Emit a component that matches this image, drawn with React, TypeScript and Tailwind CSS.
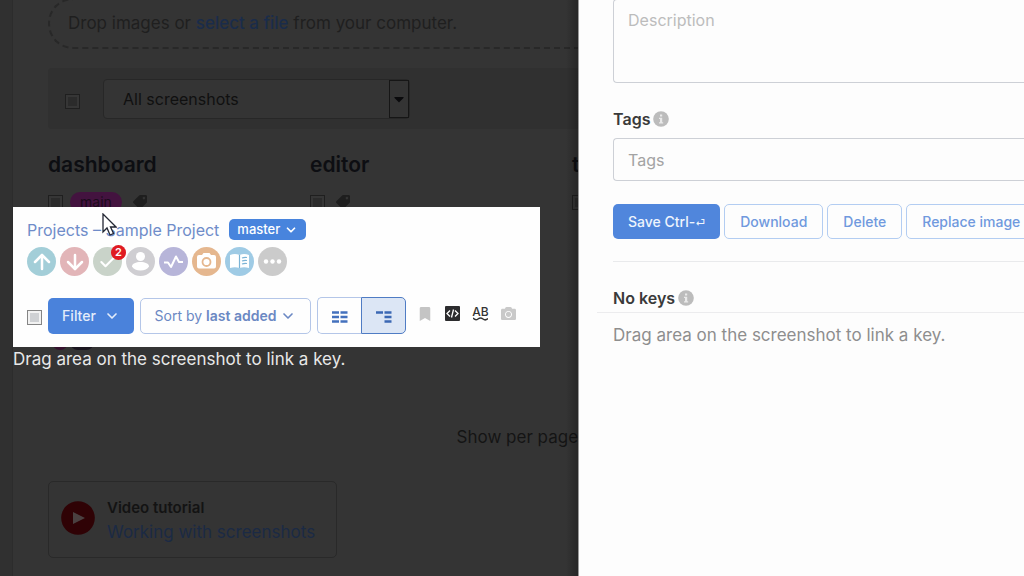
import React from "react";
import { ArrowDown, ArrowUp, Check, ChevronDown } from "lucide-react";
import { FaBookmark, FaCamera, FaCaretDown, FaTag } from "react-icons/fa";

const circles: { label: string; color: string; icon: React.ReactNode; count?: number }[] = [
  {
    label: "Upload",
    color: "bg-[#a3ced8]",
    icon: <ArrowUp className="size-6" strokeWidth={2.5} />,
  },
  {
    label: "Download",
    color: "bg-[#e2b5b8]",
    icon: <ArrowDown className="size-6" strokeWidth={2.5} />,
  },
  {
    label: "Tasks",
    color: "bg-[#c9d3c9]",
    icon: <Check className="size-5" strokeWidth={2.5} />,
    count: 2,
  },
  {
    label: "Contributors",
    color: "bg-[#cfced2]",
    icon: (
      <svg viewBox="0 0 29 29" className="size-full" fill="currentColor">
        <circle cx="14.500" cy="9.500" r="4.500" />
        <path d="M6 19.500c0-3 4-4.500 8.500-4.500s8.500 1.500 8.500 4.500c-1.500 2.500-4.500 4-8.500 4s-7-1.500-8.500-4z" />
      </svg>
    ),
  },
  {
    label: "Activity",
    color: "bg-[#b7b5d9]",
    icon: (
      <svg viewBox="0 0 29 29" className="size-full" fill="none" stroke="currentColor" strokeWidth="2">
        <path d="M5 15.500h4l3 4.500 5-10.500 3 5.500h4" strokeLinejoin="round" />
      </svg>
    ),
  },
  {
    label: "Screenshots",
    color: "bg-[#e5b78f]",
    icon: (
      <svg viewBox="0 0 29 29" className="size-full">
        <path d="M5 10q0-2 2-2h3l1.500-2h6L19 8h3q2 0 2 2v9.500q0 2-2 2H7q-2 0-2-2z" fill="currentColor" />
        <circle cx="14.500" cy="15" r="4" fill="none" stroke="#e5b78f" strokeWidth="1.800" />
      </svg>
    ),
  },
  {
    label: "Glossary",
    color: "bg-[#9fcbe5]",
    icon: (
      <svg viewBox="0 0 29 29" className="size-full">
        <path d="M5 8q5-2 9.500 0 4.500-2 9.500 0v13q-5-1.500-9.500 0-4.500-1.500-9.500 0z" fill="currentColor" />
        <path d="M14.500 8v13M17 11q2.500-1 5-.5M17 14q2.500-1 5-.5M17 17q2.500-1 5-.5" fill="none" stroke="#7bb4d6" strokeWidth="1.200" />
      </svg>
    ),
  },
  {
    label: "More",
    color: "bg-[#cbcbcb]",
    icon: (
      <svg viewBox="0 0 29 29" className="size-full" fill="currentColor">
        <circle cx="8" cy="14.500" r="2.200" />
        <circle cx="14.500" cy="14.500" r="2.200" />
        <circle cx="21" cy="14.500" r="2.200" />
      </svg>
    ),
  },
];

const groups = [
  { name: "dashboard", tag: "main" },
  { name: "editor", tag: "" },
  { name: "t", tag: "" },
];

const InfoIcon = () => (
  <svg viewBox="0 0 16 16" className="size-4">
    <circle cx="8" cy="8" r="7.800" fill="#bcbcbc" />
    <path d="M7 3.500h2.200v2H7zM6 6.800h3.200v4.400h1V12.500H6v-1.300h1V8H6z" fill="#e9e9e9" />
  </svg>
);

const DarkCheckbox: React.FC<{ label: string }> = ({ label }) => (
  <input
    type="checkbox"
    aria-label={label}
    className="size-[15px] shrink-0 appearance-none border border-[#1f1f1f] bg-[#2b2b2b] shadow-[inset_0_0_0_2px_#363636]"
  />
);

const OutlineButton: React.FC<{ children: React.ReactNode }> = ({ children }) => (
  <button className="h-[35px] shrink-0 rounded-[5px] border border-[#b3cdf2] px-[15px] text-sm font-medium whitespace-nowrap text-[#7099de]">
    {children}
  </button>
);

const Screenshots = () => (
  <main className="relative flex min-w-0 overflow-hidden bg-[#343434]">
    <div className="w-[13px] shrink-0 border-r border-[#2c2c2c] bg-[#303030]" />
    <div className="min-w-0 flex-1 pl-[35px]">
      <div className="-mt-0.5 flex h-[51px] items-center rounded-l-[25px] border-2 border-r-0 border-dashed border-[#282828] pl-[18px] text-[17px] whitespace-nowrap text-[#1f1f1f]">
        <p>
          Drop images or{" "}
          <a href="#select" className="font-medium text-[#1a2c4a]">
            select a file
          </a>{" "}
          from your computer.
        </p>
      </div>

      <div className="mt-[19px] flex h-[61px] items-center gap-[23px] rounded-l bg-[#303030] pl-[17px]">
        <span className="flex pt-1.5">
          <DarkCheckbox label="Select all" />
        </span>
        <div className="flex h-10 w-[307px] shrink-0 rounded-[4px] border border-[#272727] bg-[#343434]">
          <select
            aria-label="Filter screenshots"
            className="min-w-0 flex-1 appearance-none pl-[19px] text-base text-[#101010]"
          >
            <option>All screenshots</option>
          </select>
          <span className="flex w-5 items-center justify-center border border-[#161616]">
            <FaCaretDown className="size-4 shrink-0 text-[#0a0a0c]" />
          </span>
        </div>
      </div>

      <div className="mt-5 grid h-[201px] grid-cols-[262px_262px_262px]">
        {groups.map((group) => (
          <section key={group.name} className="flex flex-col">
            <h2 className="text-[21px] leading-8 font-semibold text-[#0d0e12]">{group.name}</h2>
            <div className="mt-[11px] flex h-5 items-center gap-[7px]">
              <DarkCheckbox label={group.name} />
              {group.tag && (
                <span className="rounded-full bg-[#43133f] px-2.5 text-sm leading-5 text-[#1c0a1b]">
                  {group.tag}
                </span>
              )}
              <FaTag className="mx-1 size-3.5 -scale-x-100 text-[#1e1e1e]" />
            </div>
            {group.tag && (
              <div className="mt-auto flex gap-0.5 pl-1">
                <span className="h-4 w-4 rounded-full bg-[#37122f]" />
                <span className="h-4 w-6 rounded-full bg-[#1b1620]" />
              </div>
            )}
          </section>
        ))}
      </div>

      <p className="mt-[75px] text-right text-[17px] leading-6 whitespace-nowrap text-[#141414]">Show per page</p>

      <div className="mt-8 flex h-[77px] w-[289px] items-center gap-3 rounded-[5px] border border-[#292929] pb-1 pl-3">
        <svg viewBox="0 0 34 34" className="size-[34px] shrink-0">
          <circle cx="17" cy="17" r="16.800" fill="#2f0205" />
          <path d="M12 11l12 6-12 6z" fill="#4a4040" />
        </svg>
        <div className="pt-1 whitespace-nowrap">
          <p className="text-[15px] leading-6 font-semibold text-[#131313]">Video tutorial</p>
          <a href="#tutorial" className="block text-[17px] leading-6 text-[#1b2a44]">
            Working with screenshots
          </a>
        </div>
      </div>
    </div>
    <div className="absolute inset-y-0 right-0 w-3 bg-linear-to-r from-transparent to-black/25" />
    <Preview />
  </main>
);

// the screenshot under edit, floating over the dimmed page
const Preview = () => (
  <div className="absolute top-[207px] left-[13px] w-[527px] whitespace-nowrap">
    <div className="h-[140px] bg-[#fefefe] px-3.5 pt-2.5">
      <div className="flex h-[25px] items-center gap-2.5 text-base text-[#6f8cc9]">
        <p>
          <a href="#projects">Projects</a> <span>–</span> <a href="#sample">Sample Project</a>
        </p>
        <button className="flex h-[21px] items-center gap-1 rounded-[5px] bg-[#4884dd] px-2 text-[13px] font-medium text-white">
          master
          <ChevronDown className="size-3.5" strokeWidth={3} />
        </button>
      </div>

      <div className="mt-[5px] flex gap-1">
        {circles.map((item) => (
          <button
            key={item.label}
            aria-label={item.label}
            className={`relative flex size-[29px] items-center justify-center rounded-full text-white ${item.color}`}
          >
            {item.icon}
            {item.count && (
              <span className="absolute -top-0.5 -right-1 size-[15px] rounded-full bg-[#e01b22] text-center text-[11px] leading-[15px] font-semibold text-white">
                {item.count}
              </span>
            )}
          </button>
        ))}
      </div>

      <div className="mt-[21px] flex h-[37px] items-center">
        <span className="mr-1.5 flex pt-1">
          <input
            type="checkbox"
            aria-label="Select all keys"
            className="size-[15px] appearance-none border border-[#858585] bg-[#cfd1d4] shadow-[inset_0_0_0_2px_#f2f2f2]"
          />
        </span>
        <button className="mr-1.5 flex h-9 w-[86px] items-center justify-center gap-2 rounded-[5px] bg-[#4a82db] text-sm font-medium text-[#e3ecfa]">
          Filter
          <ChevronDown className="size-4" strokeWidth={2.5} />
        </button>
        <button className="mr-1.5 flex h-9 w-[171px] items-center justify-center gap-1 rounded-[5px] border border-[#b4c6e8] text-sm text-[#6b88c3]">
          <span>
            Sort by <b className="font-semibold">last added</b>
          </span>
          <ChevronDown className="size-4" strokeWidth={2.5} />
        </button>
        <div className="flex h-[37px] w-[89px]">
          <button aria-label="Columns" className="flex flex-1 items-center justify-center rounded-l-[5px] border border-r-0 border-[#b4c6e8]">
            <svg viewBox="0 0 16 14" className="h-3.5 w-4" stroke="#4471bd" strokeWidth="2.600">
              <path d="M0 3.500h7M8.500 3.500h7M0 8h7M8.500 8h7M0 12.500h7M8.500 12.500h7" />
            </svg>
          </button>
          <button aria-label="Tree" className="flex flex-1 items-center justify-center rounded-r-[5px] border border-[#4f7cc4] bg-[#dce6f5]">
            <svg viewBox="0 0 16 14" className="h-3.5 w-4" stroke="#3b68b4" strokeWidth="2.600">
              <path d="M0 3.500h7M8.500 3.500h7M8.500 8h7M8.500 12.500h7" />
            </svg>
          </button>
        </div>
        <div className="mb-1 ml-3 flex items-center gap-[13px]">
          <FaBookmark className="size-3.5 text-[#c4c4c4]" />
          <svg viewBox="0 0 15 15" className="size-[15px]">
            <rect width="15" height="15" rx="1" fill="#2c2c2e" />
            <path d="M5 4.500l-3 3 3 3M10 4.500l3 3-3 3M8.500 3.500l-2 8" fill="none" stroke="#fff" strokeWidth="1.300" />
          </svg>
          <span className="flex w-[15px] flex-col items-center text-xs leading-[11px] font-medium text-[#333]">
            AB
            <svg viewBox="0 0 15 4" className="h-1 w-[15px]" fill="none" stroke="#333" strokeWidth="1.500">
              <path d="M0 1Q2.500 4 5 2t5 0 5-.5" />
            </svg>
          </span>
          <FaCamera className="size-[15px] text-[#c9c9c9]" />
        </div>
      </div>
    </div>
    <p className="text-[17px] leading-6 text-[#e8e8e8]">Drag area on the screenshot to link a key.</p>
    <svg viewBox="0 0 15 24" className="absolute top-1.5 left-[89px] h-6 w-[15px]">
      <path d="M1 1v18l4-4 3 7 3.500-1.500-3-6.500H14z" fill="#fff" stroke="#222633" strokeWidth="1.300" />
    </svg>
  </div>
);

const Details = () => (
  <aside className="min-w-0 overflow-hidden border-l border-[#9a9a9a] bg-[#fdfdfd]">
    <div className="pl-[34px]">
      <textarea
        aria-label="Description"
        placeholder="Description"
        className="-mt-px block h-[84px] w-full resize-none rounded-l-[4px] border border-r-0 border-[#cdd0d6] px-3.5 py-2 text-base placeholder:text-[#bcbcbc]"
      />
      <div className="mt-6 flex h-6 items-center gap-[3px]">
        <label htmlFor="tags" className="text-base font-semibold text-[#3a3a3a]">
          Tags
        </label>
        <InfoIcon />
      </div>
      <input
        id="tags"
        placeholder="Tags"
        className="mt-[7px] block h-[43px] w-full rounded-l-[4px] border border-r-0 border-[#cdd0d6] px-3.5 text-base placeholder:text-[#a3a3a3]"
      />
      <div className="mt-[23px] flex gap-1">
        <button className="h-[35px] shrink-0 rounded-[5px] bg-[#5086dc] px-[15px] text-sm font-medium whitespace-nowrap text-[#eef4fd]">
          Save Ctrl-<span className="text-[10px]">⏎</span>
        </button>
        <OutlineButton>Download</OutlineButton>
        <OutlineButton>Delete</OutlineButton>
        <OutlineButton>Replace image</OutlineButton>
      </div>
      <hr className="mt-[22px] border-[#e9eaec]" />
    </div>
    <div className="ml-[18px] flex h-[51px] items-end gap-[3px] border-b border-[#ececee] pb-0.5 pl-4">
      <h3 className="text-base leading-6 font-semibold text-[#3a3a3a]">No keys</h3>
      <span className="flex h-6 items-center">
        <InfoIcon />
      </span>
    </div>
    <p className="mt-2.5 pl-[34px] text-[17px] leading-6 whitespace-nowrap text-[#8e8e8e]">
      Drag area on the screenshot to link a key.
    </p>
  </aside>
);

const App = () => (
  <div className="grid min-h-screen grid-cols-[35fr_27fr] overflow-hidden font-['Inter','Liberation_Sans',sans-serif]">
    <Screenshots />
    <Details />
  </div>
);

export default App;
